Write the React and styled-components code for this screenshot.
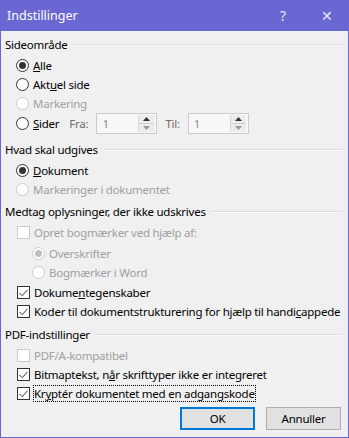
import React from "react";
import styled, { createGlobalStyle } from "styled-components";

const GlobalStyle = createGlobalStyle`
  html, body {
    margin: 0;
    padding: 0;
    background: #f0f0f0;
  }
  body {
    font-family: "Noto Sans", "Open Sans", sans-serif;
    font-size: 11.5px;
    letter-spacing: -0.25px;
    color: #000;
  }
`;

const Window = styled.div`
  width: 349px;
  height: 438px;
  box-sizing: border-box;
  border: 1px solid #6a67d3;
  border-top: none;
  background: #f0f0f0;
  display: flex;
  flex-direction: column;
  overflow: hidden;
`;

const TitleBar = styled.div`
  height: 31px;
  flex-shrink: 0;
  background: #6a67d3;
  color: #fff;
  display: flex;
  align-items: center;
  padding-left: 7px;
  font-size: 12.5px;
  letter-spacing: 0;
  margin: 0 -1px;
`;

const Title = styled.span`
  flex: 1;
`;

const TitleButton = styled.span`
  width: 44px;
  text-align: center;
  font-size: 14px;
  color: #e8e8ff;
`;

const Body = styled.div`
  padding: 3px 6px 0 4px;
  display: flex;
  flex-direction: column;
`;

const Header = styled.div`
  height: 20px;
  margin-top: ${(p) => p.$top || 0}px;
  margin-bottom: 2px;
  display: flex;
  align-items: center;
  gap: 5px;
  white-space: nowrap;
  &::after {
    content: "";
    flex: 1;
    height: 0;
    border-top: 1px solid #dcdcdc;
    border-bottom: 1px solid #fafafa;
    margin-top: 1px;
  }
`;

const Row = styled.div`
  height: ${(p) => p.$h || 19}px;
  margin-top: ${(p) => p.$top || 0}px;
  display: flex;
  align-items: center;
  padding-left: ${(p) => p.$indent || 11}px;
  white-space: nowrap;
  color: ${(p) => (p.$disabled ? "#a0a0a0" : "#000")};
`;

const RadioCircle = styled.span`
  width: 11px;
  height: 11px;
  border-radius: 50%;
  border: 1px solid ${(p) => (p.$disabled ? "#cccccc" : "#333")};
  background: #fff;
  display: inline-flex;
  align-items: center;
  justify-content: center;
  margin-right: 4px;
  flex-shrink: 0;
  &::after {
    content: "";
    width: 7px;
    height: 7px;
    border-radius: 50%;
    background: ${(p) => (p.$disabled ? "#bfbfbf" : "#333")};
    display: ${(p) => (p.$checked ? "block" : "none")};
  }
`;

const Box = styled.span`
  width: 11px;
  height: 11px;
  border: 1px solid ${(p) => (p.$disabled ? "#cccccc" : "#333")};
  background: #fff;
  margin-right: 4px;
  flex-shrink: 0;
  display: inline-flex;
  align-items: center;
  justify-content: center;
`;

const Label = styled.span`
  outline: ${(p) => (p.$focus ? "1px dotted #000" : "none")};
  outline-offset: 0;
  line-height: 15px;
`;

const Key = styled.span`
  text-decoration: underline;
`;

const FieldLabel = styled.span`
  color: #6d6d6d;
  margin-left: ${(p) => p.$left}px;
  margin-right: ${(p) => p.$right}px;
`;

const Spin = styled.div`
  width: 59px;
  height: 19px;
  border: 1px solid #cccccc;
  background: #f7f7f7;
  display: flex;
  align-items: stretch;
  box-sizing: content-box;
`;

const SpinValue = styled.span`
  flex: 1;
  color: #8a8a8a;
  padding-left: 5px;
  display: flex;
  align-items: center;
`;

const SpinButtons = styled.span`
  width: 15px;
  margin: 1px 2px 1px 0;
  border-left: 1px solid #dadada;
  display: flex;
  flex-direction: column;
`;

const SpinHalf = styled.span`
  flex: 1;
  display: flex;
  align-items: center;
  justify-content: center;
  background: #ececec;
  border-bottom: ${(p) => (p.$top ? "1px solid #d0d0d0" : "none")};
`;

const ButtonRow = styled.div`
  display: flex;
  justify-content: flex-end;
  gap: 11px;
  margin-top: 4px;
  padding-right: 1px;
`;

const Button = styled.button`
  width: 75px;
  height: 23px;
  font-family: inherit;
  font-size: 11.5px;
  letter-spacing: -0.25px;
  background: #e1e1e1;
  color: #000;
  border: ${(p) => (p.$primary ? "2px solid #0078d7" : "1px solid #adadad")};
  padding: 0;
  box-sizing: border-box;
`;

const Check = ({ disabled }) => (
  <Box $disabled={disabled}>
    {!disabled && (
      <svg width="9" height="8" viewBox="0 0 9 8">
        <path d="M0.5 4 L3.2 6.7 L8.5 0.8" fill="none" stroke="#333" strokeWidth="1" />
      </svg>
    )}
  </Box>
);

const Radio = ({ checked, disabled, indent, top, children }) => (
  <Row $disabled={disabled} $indent={indent} $top={top}>
    <RadioCircle $checked={checked} $disabled={disabled} />
    <Label>{children}</Label>
  </Row>
);

const CheckRow = ({ checked, disabled, top, focus, children }) => (
  <Row $disabled={disabled} $indent={12} $top={top}>
    {checked ? <Check /> : <Box $disabled={disabled} />}
    <Label $focus={focus}>{children}</Label>
  </Row>
);

const Spinner = () => (
  <Spin>
    <SpinValue>1</SpinValue>
    <SpinButtons>
      <SpinHalf $top>
        <svg width="7" height="4" viewBox="0 0 7 4">
          <path d="M0 4 L3.5 0 L7 4 Z" fill="#333" />
        </svg>
      </SpinHalf>
      <SpinHalf>
        <svg width="7" height="4" viewBox="0 0 7 4">
          <path d="M0 0 L3.5 4 L7 0 Z" fill="#9a9a9a" />
        </svg>
      </SpinHalf>
    </SpinButtons>
  </Spin>
);

export default function App() {
  return (
    <>
      <GlobalStyle />
      <Window>
        <TitleBar>
          <Title>Indstillinger</Title>
          <TitleButton>?</TitleButton>
          <TitleButton>✕</TitleButton>
        </TitleBar>
        <Body>
          <Header>Sideområde</Header>
          <Radio checked>
            <Key>A</Key>lle
          </Radio>
          <Radio>
            Akt<Key>u</Key>el side
          </Radio>
          <Radio disabled>Markering</Radio>
          <Row $h={21}>
            <RadioCircle />
            <Label>
              <Key>S</Key>ider
            </Label>
            <FieldLabel $left={10} $right={8}>Fra:</FieldLabel>
            <Spinner />
            <FieldLabel $left={8} $right={8}>Til:</FieldLabel>
            <Spinner />
          </Row>

          <Header $top={5}>Hvad skal udgives</Header>
          <Radio checked>
            <Key>D</Key>okument
          </Radio>
          <Radio disabled>Markeringer i dokumentet</Radio>

          <Header $top={2}>Medtag oplysninger, der ikke udskrives</Header>
          <CheckRow disabled>Opret bogmærker ved hjælp af:</CheckRow>
          <Radio checked disabled indent={27} top={2}>
            Overskrifter
          </Radio>
          <Radio disabled indent={27}>
            Bogmærker i Word
          </Radio>
          <CheckRow checked top={1}>
            Dokume<Key>n</Key>tegenskaber
          </CheckRow>
          <CheckRow checked>
            Koder til dokumentstrukturering for hjælp til handi<Key>c</Key>appede
          </CheckRow>

          <Header $top={3}>PDF-indstillinger</Header>
          <CheckRow disabled>PDF/A-kompatibel</CheckRow>
          <CheckRow checked>
            Bitmaptekst, n<Key>å</Key>r skrifttyper ikke er integreret
          </CheckRow>
          <CheckRow checked focus>
            Kr<Key>y</Key>ptér dokumentet med en adgangskode
          </CheckRow>

          <ButtonRow>
            <Button $primary>OK</Button>
            <Button>Annuller</Button>
          </ButtonRow>
        </Body>
      </Window>
    </>
  );
}
